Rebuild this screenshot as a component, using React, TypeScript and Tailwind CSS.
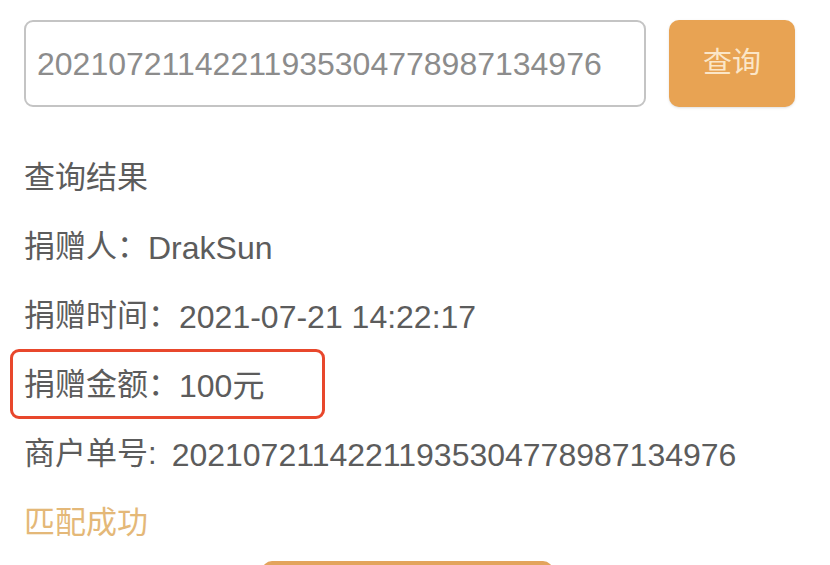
const font = { fontFamily: '"Liberation Sans", "Noto Sans CJK SC", sans-serif' };

const rows: { label: string; value: string; highlight?: boolean; gap?: boolean }[] = [
  { label: "捐赠人：", value: "DrakSun" },
  { label: "捐赠时间：", value: "2021-07-21 14:22:17" },
  { label: "捐赠金额：", value: "100元", highlight: true },
  { label: "商户单号:", value: "20210721142211935304778987134976", gap: true },
];

export default function App() {
  return (
    <div className="w-[830px] h-[565px] overflow-hidden bg-white pl-6 text-[#5c5c5c]" style={font}>
      <div className="flex gap-[23px] pt-5">
        <div className="w-[622px] h-[87px] rounded-[9px] border-2 border-[#c4c4c4] flex items-center pl-[11px] text-[32px] text-[#8c8c8c]">
          20210721142211935304778987134976
        </div>
        <button className="w-[126px] h-[87px] rounded-[10px] bg-[#e8a353] text-[29px] text-[#fbe6c8] shadow-sm">
          查询
        </button>
      </div>

      <div className="mt-[37px] text-[31px]">
        <div className="h-[69px] flex items-center">查询结果</div>
        {rows.map((r) => (
          <div key={r.label} className="relative h-[69px] flex items-center">
            {r.highlight && (
              <span className="absolute -left-[14px] top-[-2px] w-[315px] h-[70px] rounded-[9px] border-[3px] border-[#e8472c]" />
            )}
            <span>{r.label}</span>
            <span className={r.gap ? "ml-[15px] text-[32px]" : "text-[32px]"}>{r.value}</span>
          </div>
        ))}
        <div className="h-[69px] flex items-center text-[#e4b878]">匹配成功</div>
      </div>

      <div className="ml-[238px] w-[291px] h-[30px] mt-[3px] rounded-t-[10px] bg-[#e3a45c]" />
    </div>
  );
}
